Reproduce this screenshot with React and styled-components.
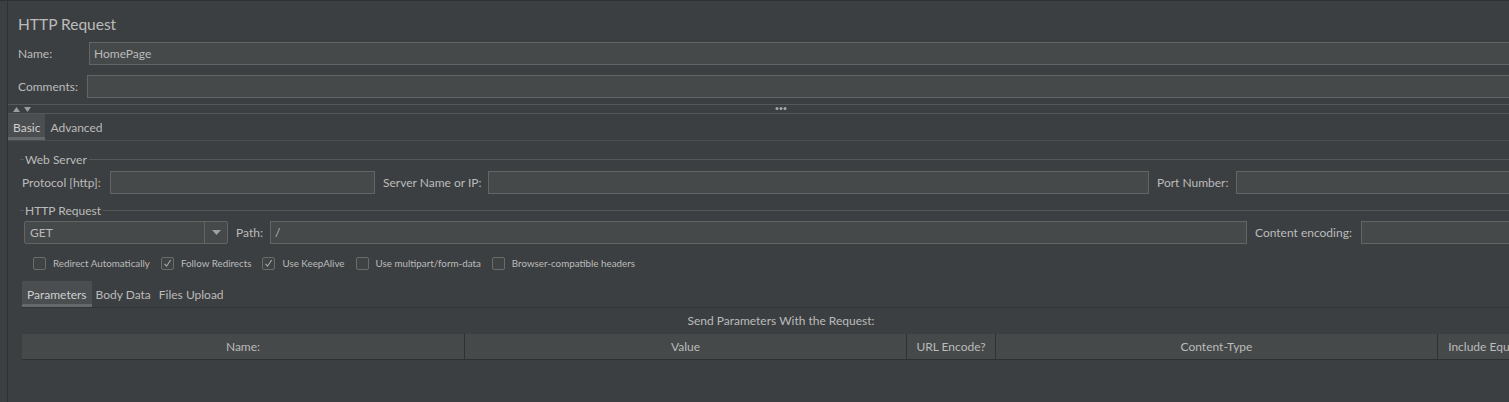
import React from 'react';
import styled, { createGlobalStyle } from 'styled-components';

const theme = {
  bg: '#3c3f41',
  field: '#45494a',
  fieldBorder: '#646464',
  text: '#bbbbbb',
  dark: '#2e3133',
  rule: '#55585a',
};

const GlobalStyle = createGlobalStyle`
  html, body {
    margin: 0;
    padding: 0;
    background: ${theme.bg};
    overflow: hidden;
  }
  body {
    font-family: Lato, "Open Sans", sans-serif;
    font-size: 12px;
    color: ${theme.text};
  }
`;

const Frame = styled.div`
  display: flex;
  width: 1554px;
  height: 401px;
  border-top: 1px solid ${theme.dark};
  background: ${theme.bg};
`;

const Gutter = styled.div`
  flex: none;
  width: 7px;
  border-right: 1px solid ${theme.dark};
`;

const Main = styled.div`
  flex: 1;
  min-width: 0;
  display: flex;
  flex-direction: column;
`;

const Title = styled.div`
  padding: 13px 0 0 10px;
  font-size: 15.5px;
  line-height: 20px;
`;

const FieldRow = styled.div`
  display: flex;
  align-items: center;
  padding-left: 10px;
  margin-top: ${({ $top }) => $top}px;
`;

const Label = styled.span`
  flex: none;
  width: ${({ $w }) => ($w ? `${$w}px` : 'auto')};
  white-space: nowrap;
`;

const Field = styled.div`
  flex: 1;
  min-width: 0;
  box-sizing: border-box;
  height: 23px;
  display: flex;
  align-items: center;
  padding-left: 4px;
  background: ${theme.field};
  border: 1px solid ${theme.fieldBorder};
  white-space: nowrap;
`;

const Splitter = styled.div`
  position: relative;
  margin-top: 6px;
  height: 8px;
  border-top: 1px solid ${theme.rule};
  border-bottom: 1px solid ${theme.rule};
  display: flex;
  align-items: center;
  padding-left: 5px;
`;

const Arrows = styled.div`
  display: flex;
  gap: 4px;
`;

const Dots = styled.div`
  position: absolute;
  left: 50%;
  top: 2px;
  transform: translateX(-50%);
  display: flex;
  gap: 1px;
  span {
    width: 3px;
    height: 3px;
    border-radius: 50%;
    background: #a8a8a8;
  }
`;

const TabBar = styled.div`
  display: flex;
  height: 26px;
  margin-top: ${({ $top }) => $top || 0}px;
  margin-left: ${({ $left }) => $left || 0}px;
  border-bottom: 1px solid ${({ $line }) => $line};
`;

const Tab = styled.div`
  display: flex;
  align-items: center;
  padding: 0 ${({ $pad }) => $pad}px;
  background: ${({ $active }) => ($active ? '#4a4e50' : 'transparent')};
  box-shadow: ${({ $active }) => ($active ? 'inset 0 -3px 0 #65696b' : 'none')};
  color: ${({ $active }) => ($active ? '#cfcfcf' : theme.text)};
  white-space: nowrap;
`;

const Body = styled.div`
  padding-left: 12px;
  display: flex;
  flex-direction: column;
`;

const GroupHead = styled.div`
  display: flex;
  align-items: center;
  height: 14px;
  margin-top: ${({ $top }) => $top}px;
  &::before {
    content: '';
    width: 4px;
    border-top: 1px solid ${theme.rule};
    margin-right: 1px;
  }
  &::after {
    content: '';
    flex: 1;
    border-top: 1px solid ${theme.rule};
    margin-left: 2px;
  }
`;

const GridRow = styled.div`
  display: grid;
  grid-template-columns: ${({ $cols }) => $cols};
  column-gap: 8px;
  align-items: center;
  margin-top: ${({ $top }) => $top}px;
  padding-left: ${({ $left }) => $left}px;
`;

const Combo = styled.div`
  box-sizing: border-box;
  height: 23px;
  display: flex;
  background: ${theme.field};
  border: 1px solid ${theme.fieldBorder};
  border-radius: 2px;
`;

const ComboText = styled.div`
  flex: 1;
  display: flex;
  align-items: center;
  padding-left: 5px;
`;

const ComboButton = styled.div`
  width: 22px;
  border-left: 1px solid ${theme.fieldBorder};
  display: flex;
  align-items: center;
  justify-content: center;
`;

const Checks = styled.div`
  display: flex;
  align-items: center;
  gap: 11px;
  height: 16px;
  margin-top: 11px;
  padding-left: 13px;
  font-size: 9.8px;
`;

const CheckItem = styled.label`
  display: flex;
  align-items: center;
  gap: 7px;
  white-space: nowrap;
`;

const Box = styled.span`
  box-sizing: border-box;
  width: 13px;
  height: 13px;
  border: 1px solid #6b6b6b;
  border-radius: 2px;
  background: #3f4344;
  display: flex;
  align-items: center;
  justify-content: center;
`;

const Caption = styled.div`
  width: 1518px;
  margin-left: 2px;
  margin-top: 5px;
  line-height: 16px;
  text-align: center;
`;

const TableHead = styled.div`
  display: grid;
  grid-template-columns: 443px 442px 89px 442px 1fr;
  width: 1518px;
  height: 25px;
  margin: 5px 0 0 2px;
  background: #45494a;
  border-bottom: 1px solid ${theme.dark};
`;

const HeadCell = styled.div`
  display: flex;
  align-items: center;
  justify-content: center;
  border-right: 1px solid ${theme.dark};
  white-space: nowrap;
  overflow: hidden;
`;

const Check = ({ label, checked }) => (
  <CheckItem>
    <Box>
      {checked && (
        <svg width="9" height="9" viewBox="0 0 9 9">
          <path d="M1.5 4.8 L3.6 7.2 L7.6 1" fill="none" stroke="#a9a9a9" strokeWidth="1.1" />
        </svg>
      )}
    </Box>
    {label}
  </CheckItem>
);

const Triangle = ({ up }) => (
  <svg width="7" height="5" viewBox="0 0 7 5">
    <path d={up ? 'M0 5 L3.5 0 L7 5 Z' : 'M0 0 L3.5 5 L7 0 Z'} fill="#9c9c9c" />
  </svg>
);

export default function App() {
  return (
    <>
      <GlobalStyle />
      <Frame>
        <Gutter />
        <Main>
          <Title>HTTP Request</Title>
          <FieldRow $top={8}>
            <Label $w={71}>Name:</Label>
            <Field>HomePage</Field>
          </FieldRow>
          <FieldRow $top={10}>
            <Label $w={69}>Comments:</Label>
            <Field />
          </FieldRow>
          <Splitter>
            <Arrows>
              <Triangle up />
              <Triangle />
            </Arrows>
            <Dots>
              <span />
              <span />
              <span />
            </Dots>
          </Splitter>
          <TabBar $line="#4b4e50">
            <Tab $active $pad={5}>Basic</Tab>
            <Tab $pad={5}>Advanced</Tab>
          </TabBar>
          <Body>
            <GroupHead $top={11}>Web Server</GroupHead>
            <GridRow $top={5} $left={2} $cols="80px 265px 97px 661px 71px 1fr">
              <Label>Protocol [http]:</Label>
              <Field />
              <Label>Server Name or IP:</Label>
              <Field />
              <Label>Port Number:</Label>
              <Field />
            </GridRow>
            <GroupHead $top={9}>HTTP Request</GroupHead>
            <GridRow $top={4} $left={4} $cols="204px 26px 977px 98px 1fr">
              <Combo>
                <ComboText>GET</ComboText>
                <ComboButton>
                  <svg width="9" height="5" viewBox="0 0 9 5">
                    <path d="M0 0 L9 0 L4.5 5 Z" fill="#a0a0a0" />
                  </svg>
                </ComboButton>
              </Combo>
              <Label>Path:</Label>
              <Field>/</Field>
              <Label>Content encoding:</Label>
              <Field />
            </GridRow>
            <Checks>
              <Check label="Redirect Automatically" />
              <Check label="Follow Redirects" checked />
              <Check label="Use KeepAlive" checked />
              <Check label="Use multipart/form-data" />
              <Check label="Browser-compatible headers" />
            </Checks>
            <TabBar $top={10} $left={2} $line="#323538">
              <Tab $active $pad={5}>Parameters</Tab>
              <Tab $pad={4}>Body Data</Tab>
              <Tab $pad={4}>Files Upload</Tab>
            </TabBar>
            <Caption>Send Parameters With the Request:</Caption>
            <TableHead>
              <HeadCell>Name:</HeadCell>
              <HeadCell>Value</HeadCell>
              <HeadCell>URL Encode?</HeadCell>
              <HeadCell>Content-Type</HeadCell>
              <HeadCell>Include Equals?</HeadCell>
            </TableHead>
          </Body>
        </Main>
      </Frame>
    </>
  );
}
